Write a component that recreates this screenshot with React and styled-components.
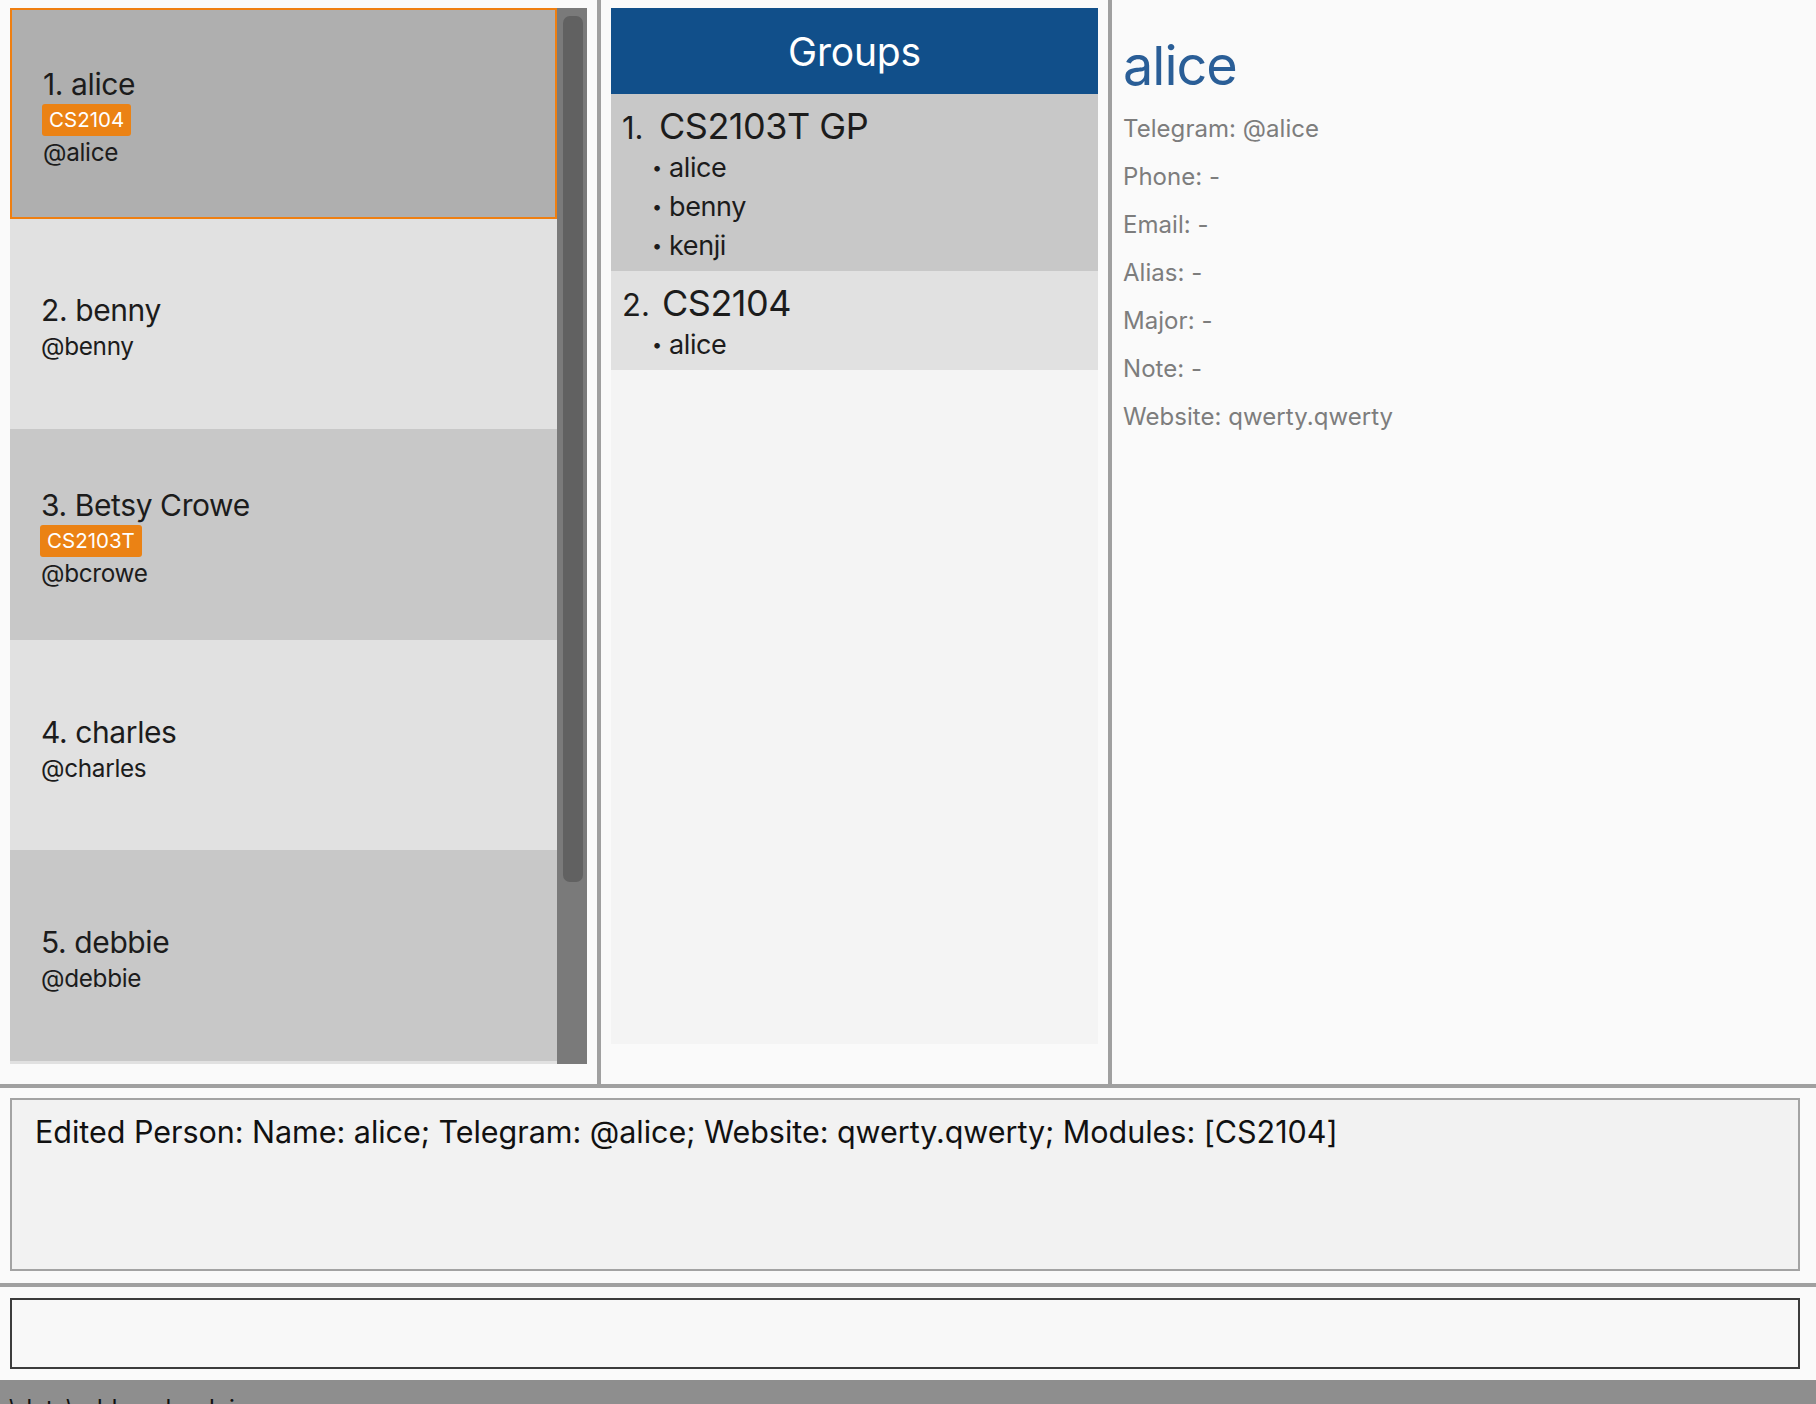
import React from "react";
import styled, { createGlobalStyle } from "styled-components";

const GlobalStyle = createGlobalStyle`
  html, body {
    margin: 0;
    padding: 0;
    width: 1816px;
    height: 1404px;
    overflow: hidden;
    background: #fafafa;
  }
  * { box-sizing: border-box; }
  body {
    font-family: Inter, "Noto Sans", "Liberation Sans", sans-serif;
    color: #1a1a1a;
  }
`;

const Page = styled.div`
  width: 1816px;
  height: 1404px;
  display: flex;
  flex-direction: column;
  background: #fafafa;
  overflow: hidden;
`;

const TopArea = styled.div`
  height: 1084px;
  flex-shrink: 0;
  display: flex;
`;

const VDivider = styled.div`
  width: 4px;
  flex-shrink: 0;
  background: #a0a0a0;
`;

const HDivider = styled.div`
  height: 4px;
  flex-shrink: 0;
  background: #a0a0a0;
`;

const PersonPane = styled.div`
  width: 597px;
  flex-shrink: 0;
  padding: 8px 10px 20px 10px;
  display: flex;
`;

const PersonList = styled.div`
  flex: 1;
  overflow: hidden;
  display: flex;
  flex-direction: column;
  background: #e1e1e1;
`;

const PersonCard = styled.div`
  height: 210.6px;
  flex-shrink: 0;
  display: flex;
  flex-direction: column;
  justify-content: center;
  align-items: flex-start;
  padding-top: 5px;
  padding-left: 31px;
  background: ${(p) => (p.$selected ? "#afafaf" : p.$odd ? "#c8c8c8" : "#e1e1e1")};
  border: ${(p) => (p.$selected ? "2px solid #ef7f11" : "none")};
`;

const PersonName = styled.div`
  font-size: 30px;
  line-height: 40px;
  letter-spacing: -0.4px;
  color: #1c1c1c;
`;

const Tag = styled.span`
  display: inline-block;
  height: 32px;
  line-height: 32px;
  padding: 0 7px;
  margin-left: -1px;
  background: #eb8214;
  color: #ffffff;
  font-size: 20.5px;
  border-radius: 3px;
`;

const Handle = styled.div`
  font-size: 24.3px;
  line-height: 32px;
  letter-spacing: -0.3px;
  color: #1c1c1c;
`;

const ScrollTrack = styled.div`
  width: 30px;
  flex-shrink: 0;
  background: #7a7a7a;
  padding: 8px 4px 0 6px;
`;

const ScrollThumb = styled.div`
  height: 866px;
  background: #616161;
  border-radius: 7px;
`;

const GroupPane = styled.div`
  width: 507px;
  flex-shrink: 0;
  padding: 8px 10px 40px 10px;
  display: flex;
  flex-direction: column;
`;

const GroupHeader = styled.div`
  height: 86px;
  flex-shrink: 0;
  background: #114f8a;
  color: #ffffff;
  font-size: 39px;
  letter-spacing: -0.2px;
  display: flex;
  align-items: center;
  justify-content: center;
`;

const GroupList = styled.div`
  flex: 1;
  background: #f4f4f4;
  display: flex;
  flex-direction: column;
`;

const GroupCard = styled.div`
  background: ${(p) => (p.$odd ? "#c8c8c8" : "#e1e1e1")};
  padding: 10px 11px 6px 11px;
`;

const GroupTitleRow = styled.div`
  display: flex;
  align-items: baseline;
  height: 44px;
  line-height: 44px;
`;

const GroupIndex = styled.span`
  font-size: 31px;
  color: #1c1c1c;
  width: ${(p) => p.$w}px;
  flex-shrink: 0;
`;

const GroupName = styled.span`
  font-size: 36px;
  letter-spacing: -0.5px;
  color: #1c1c1c;
`;

const MemberList = styled.ul`
  list-style: none;
  margin: 0;
  padding: 0 0 0 30px;
`;

const Member = styled.li`
  font-size: 27px;
  line-height: 39px;
  letter-spacing: -0.4px;
  color: #1c1c1c;
  &::before {
    content: "•";
    display: inline-block;
    width: 17px;
    font-size: 18px;
    vertical-align: 3px;
  }
`;

const DetailPane = styled.div`
  flex: 1;
  padding: 30px 11px;
`;

const DetailName = styled.div`
  font-size: 54px;
  line-height: 72px;
  letter-spacing: -1px;
  color: #2a5e97;
  margin-bottom: 3px;
`;

const DetailRow = styled.div`
  font-size: 24px;
  line-height: 48px;
  letter-spacing: 0.05px;
  color: #7d7d7d;
`;

const ResultArea = styled.div`
  height: 195px;
  flex-shrink: 0;
  padding: 10px 16px 12px 10px;
`;

const ResultBox = styled.div`
  height: 100%;
  border: 2px solid #a3a3a3;
  background: #f2f2f2;
  padding: 14px 23px;
  font-size: 30.5px;
  line-height: 36px;
  letter-spacing: -0.03px;
  color: #111111;
`;

const CommandArea = styled.div`
  height: 93px;
  flex-shrink: 0;
  padding: 11px 16px 11px 10px;
`;

const CommandBox = styled.div`
  height: 100%;
  border: 2px solid #3c3c3c;
  background: #f8f8f8;
`;

const StatusBar = styled.div`
  flex: 1;
  background: #8e8e8e;
  padding: 14px 0 0 2px;
  font-size: 24px;
  line-height: 29px;
  color: #111111;
  white-space: nowrap;
  overflow: hidden;
`;

const persons = [
  { name: "alice", tag: "CS2104", handle: "@alice", selected: true },
  { name: "benny", handle: "@benny" },
  { name: "Betsy Crowe", tag: "CS2103T", handle: "@bcrowe" },
  { name: "charles", handle: "@charles" },
  { name: "debbie", handle: "@debbie" },
];

const groups = [
  { name: "CS2103T GP", members: ["alice", "benny", "kenji"] },
  { name: "CS2104", members: ["alice"] },
];

const details = [
  "Telegram: @alice",
  "Phone: -",
  "Email: -",
  "Alias: -",
  "Major: -",
  "Note: -",
  "Website: qwerty.qwerty",
];

export default function App() {
  return (
    <>
      <GlobalStyle />
      <Page>
        <TopArea>
          <PersonPane>
            <PersonList>
              {persons.map((p, i) => (
                <PersonCard key={p.name} $selected={p.selected} $odd={i % 2 === 0}>
                  <PersonName>
                    {i + 1}. {p.name}
                  </PersonName>
                  {p.tag && <Tag>{p.tag}</Tag>}
                  <Handle>{p.handle}</Handle>
                </PersonCard>
              ))}
            </PersonList>
            <ScrollTrack>
              <ScrollThumb />
            </ScrollTrack>
          </PersonPane>
          <VDivider />
          <GroupPane>
            <GroupHeader>Groups</GroupHeader>
            <GroupList>
              {groups.map((g, i) => (
                <GroupCard key={g.name} $odd={i % 2 === 0}>
                  <GroupTitleRow>
                    <GroupIndex $w={i === 0 ? 37 : 40}>{i + 1}.</GroupIndex>
                    <GroupName>{g.name}</GroupName>
                  </GroupTitleRow>
                  <MemberList>
                    {g.members.map((m) => (
                      <Member key={m}>{m}</Member>
                    ))}
                  </MemberList>
                </GroupCard>
              ))}
            </GroupList>
          </GroupPane>
          <VDivider />
          <DetailPane>
            <DetailName>alice</DetailName>
            {details.map((d) => (
              <DetailRow key={d}>{d}</DetailRow>
            ))}
          </DetailPane>
        </TopArea>
        <HDivider />
        <ResultArea>
          <ResultBox>
            Edited Person: Name: alice; Telegram: @alice; Website: qwerty.qwerty; Modules: [CS2104]
          </ResultBox>
        </ResultArea>
        <HDivider />
        <CommandArea>
          <CommandBox />
        </CommandArea>
        <StatusBar>.\data\addressbook.json</StatusBar>
      </Page>
    </>
  );
}
